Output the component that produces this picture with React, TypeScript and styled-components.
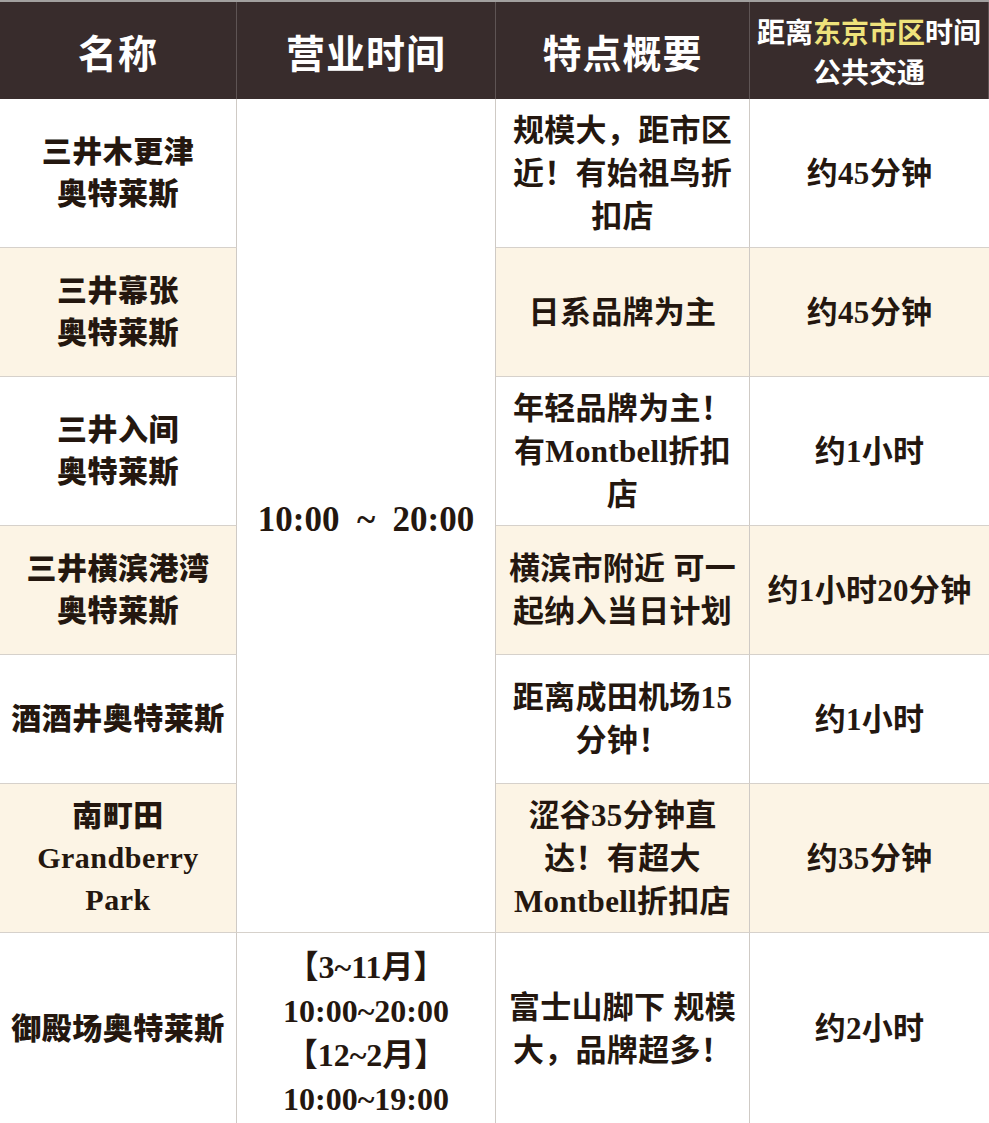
import styled, { createGlobalStyle } from 'styled-components'

const GlobalStyle = createGlobalStyle`
  html, body {
    margin: 0;
    padding: 0;
    background: #ffffff;
  }
  body {
    font-family: "Liberation Serif", "Noto Sans CJK SC", serif;
  }
`

type Shop = {
    name: string[]
    feature: string[]
    distance: string
    height: number
    hours?: string[]
}

const shops: Shop[] = [
    { name: ['三井木更津', '奥特莱斯'], feature: ['规模大，距市区', '近！有始祖鸟折', '扣店'], distance: '约45分钟', height: 149 },
    { name: ['三井幕张', '奥特莱斯'], feature: ['日系品牌为主'], distance: '约45分钟', height: 129 },
    { name: ['三井入间', '奥特莱斯'], feature: ['年轻品牌为主！', '有Montbell折扣', '店'], distance: '约1小时', height: 149 },
    { name: ['三井横滨港湾', '奥特莱斯'], feature: ['横滨市附近 可一', '起纳入当日计划'], distance: '约1小时20分钟', height: 129 },
    { name: ['酒酒井奥特莱斯'], feature: ['距离成田机场15', '分钟！'], distance: '约1小时', height: 129 },
    { name: ['南町田', 'Grandberry', 'Park'], feature: ['涩谷35分钟直', '达！有超大', 'Montbell折扣店'], distance: '约35分钟', height: 149 },
    {
        name: ['御殿场奥特莱斯'],
        feature: ['富士山脚下 规模', '大，品牌超多！'],
        distance: '约2小时',
        height: 192,
        hours: ['【3~11月】', '10:00~20:00', '【12~2月】', '10:00~19:00'],
    },
]

const sharedRows = shops.filter((s) => !s.hours).length

export default function App() {
    return (
        <>
            <GlobalStyle />
            <Table $rows={[97, ...shops.map((s) => s.height)]}>
                <HeadCell>名称</HeadCell>
                <HeadCell>营业时间</HeadCell>
                <HeadCell>特点概要</HeadCell>
                <HeadCell $small>
                    <span>距离<Gold>东京市区</Gold>时间</span>
                    <span>公共交通</span>
                </HeadCell>

                {shops.map((shop, i) => (
                    <Row key={i} shop={shop} index={i} />
                ))}
            </Table>
        </>
    )
}

const Row = ({ shop, index }: { shop: Shop; index: number }) => {
    const cream = index % 2 === 1
    return (
        <>
            <NameCell $cream={cream}>
                {shop.name.map((l) => <Line key={l}>{l}</Line>)}
            </NameCell>
            {index === 0 && (
                <HoursCell $span={sharedRows}>10:00&nbsp;&nbsp;~&nbsp;&nbsp;20:00</HoursCell>
            )}
            {shop.hours && (
                <HoursCell $span={1} $small>
                    {shop.hours.map((l) => <Line key={l}>{l}</Line>)}
                </HoursCell>
            )}
            <BodyCell $cream={cream}>
                {shop.feature.map((l) => <Line key={l}>{l}</Line>)}
            </BodyCell>
            <BodyCell $cream={cream} $last>{shop.distance}</BodyCell>
        </>
    )
}

const Table = styled.div<{ $rows: number[] }>`
  display: grid;
  grid-template-columns: 237px 259px 254px 239px;
  grid-template-rows: ${(p) => p.$rows.map((r) => `${r}px`).join(' ')};
  width: 989px;
  box-sizing: border-box;
  border-top: 2px solid #a2a09f;
  overflow: hidden;
`

const Cell = styled.div`
  display: flex;
  flex-direction: column;
  align-items: center;
  justify-content: center;
  text-align: center;
  box-sizing: border-box;
  color: #24170f;
  white-space: nowrap;
  border-right: 1px solid #cfcac5;
  border-bottom: 1px solid #d6d1cb;
`

const HeadCell = styled(Cell)<{ $small?: boolean }>`
  background: #382c2c;
  color: #ffffff;
  font-family: "Noto Sans CJK SC", sans-serif;
  font-weight: 700;
  font-size: ${(p) => (p.$small ? '28px' : '39px')};
  line-height: ${(p) => (p.$small ? '40px' : '44px')};
  letter-spacing: ${(p) => (p.$small ? '0' : '1px')};
  border-right-color: #5e5454;
  border-bottom: none;
  &:last-child {
    border-right: none;
    padding-left: 8px;
  }
`

const Gold = styled.span`
  color: #efe27b;
`

const NameCell = styled(Cell)<{ $cream: boolean }>`
  background: ${(p) => (p.$cream ? '#fcf4e5' : '#ffffff')};
  font-weight: 900;
  font-size: 30px;
  line-height: 42px;
  letter-spacing: 0.5px;
`

const HoursCell = styled(Cell)<{ $span: number; $small?: boolean }>`
  grid-row: span ${(p) => p.$span};
  background: #ffffff;
  font-weight: 700;
  font-size: ${(p) => (p.$small ? '32px' : '35px')};
  line-height: 44px;
  padding-top: 8px;
`

const BodyCell = styled(Cell)<{ $cream: boolean; $last?: boolean }>`
  background: ${(p) => (p.$cream ? '#fcf4e5' : '#ffffff')};
  font-weight: 700;
  font-size: 31px;
  line-height: 43px;
  letter-spacing: 0.3px;
  ${(p) => p.$last && 'border-right: none;'}
`

const Line = styled.span`
  display: block;
`
